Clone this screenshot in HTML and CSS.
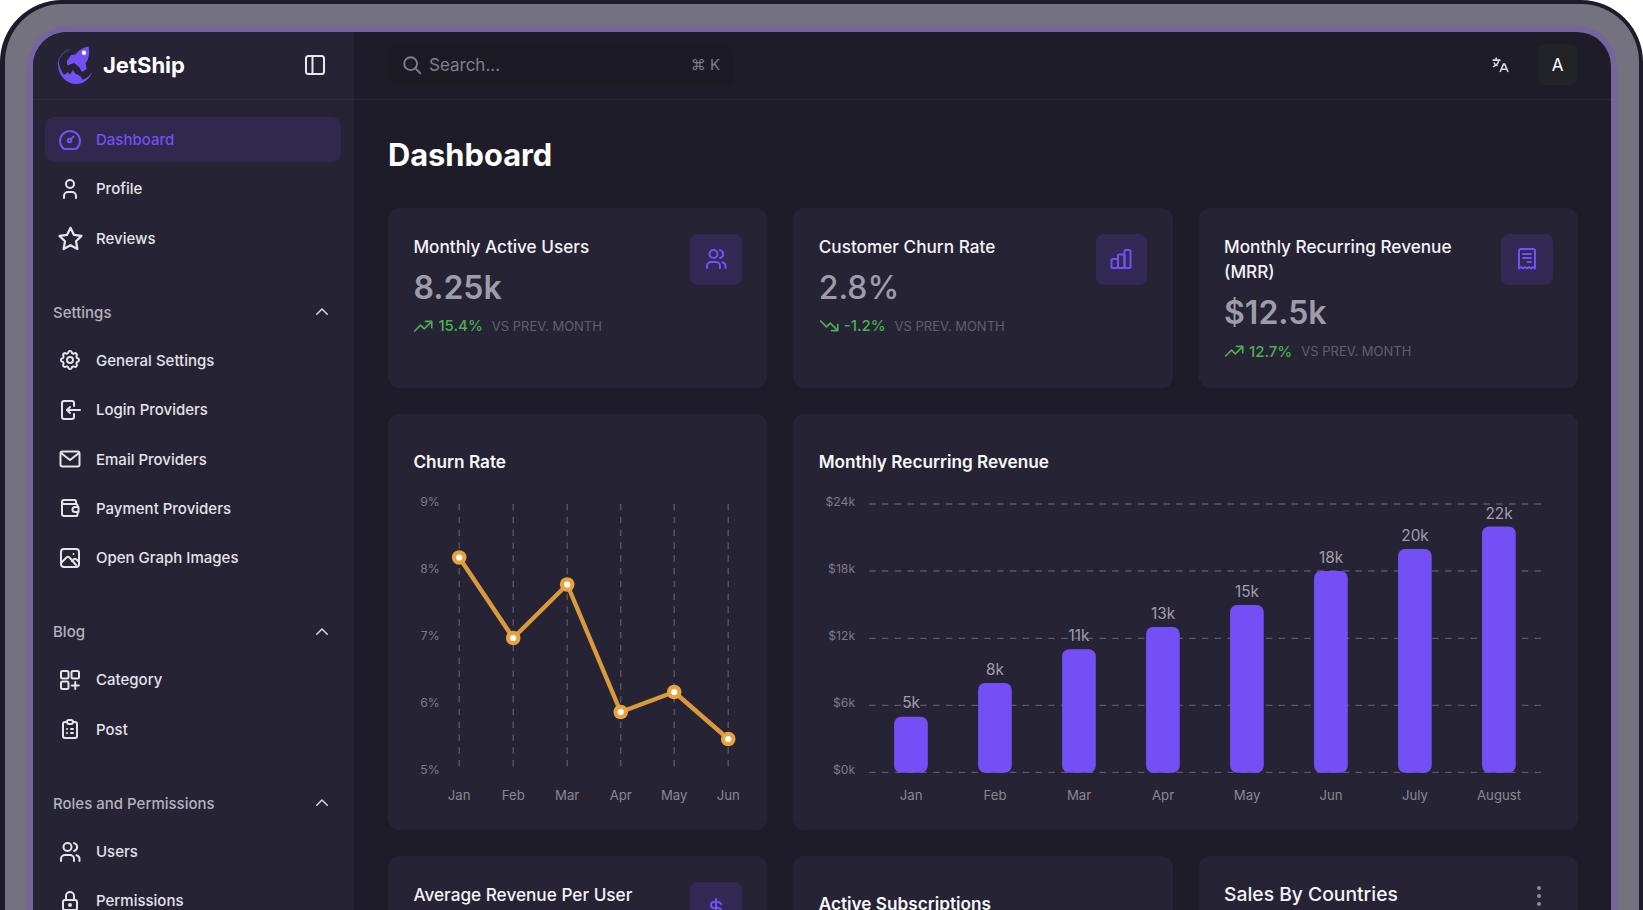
FILE: index.html
```html
<!DOCTYPE html>
<html lang="en">
<head>
    <meta charset="UTF-8">
    <meta name="viewport" content="width=device-width, initial-scale=1.0">
    <title>JetShip Dashboard</title>
    <link rel="stylesheet" href="styles.css">
</head>

<body>
    <div class="device">
        <div class="screen">

            <!-- Sidebar -->
            <aside class="sidebar">
                <div class="brand">
                    <div class="brand-left">
                        <svg class="logo" viewBox="0 0 36 38">
                            <path d="M12.5 3.4A17.5 17.5 0 0 0 1 18" fill="none" stroke="#4a3a9a" stroke-width="1.2"/>
                            <path d="M1.5 14C-1 26 7 37 18 38C26 38.5 32 33.5 35.5 26C30 33 24 35.5 17 34.5C8 33 2.5 25 1.5 14Z" fill="#7350f5"/>
                            <path d="M4.5 28.5C7 29 9 28.5 10.5 26L13 28.5L16 24L18.5 28C22 28.5 25 31 26 35.5C18 38.5 9.5 36.5 4.5 28.5Z" fill="#7350f5"/>
                            <path d="M31.5 0.5C33 6 32 13 28.5 17.5L29.8 23L25 26L22.5 21.5L17 17L10 19.5L10 15L14 9L18.5 8.5C21.5 4 26 1.5 31.5 0.5Z" fill="#7350f5"/>
                            <circle cx="27" cy="6.8" r="2.2" fill="#fff"/>
                        </svg>
                        <span class="brand-name">JetShip</span>
                    </div>
                    <svg class="icon" viewBox="0 0 24 24"><rect x="3" y="3" width="18" height="18" rx="2.5"/><path d="M9.5 3v18"/></svg>
                </div>

                <nav class="nav">
                    <a class="nav-item active">
                        <svg class="icon" viewBox="0 0 24 24"><path d="M6 21a10 10 0 1 1 12 0Z"/><circle cx="11.5" cy="12.5" r="1.8"/><path d="M13 11l2.5-2.5"/></svg>
                        Dashboard
                    </a>
                    <a class="nav-item">
                        <svg class="icon" viewBox="0 0 24 24"><circle cx="12" cy="7" r="4"/><path d="M6 21v-2a4 4 0 0 1 4-4h4a4 4 0 0 1 4 4v2"/></svg>
                        Profile
                    </a>
                    <a class="nav-item">
                        <svg class="icon star" viewBox="0 0 24 24"><path d="M12 2.5l3 6.2 6.8 1-4.9 4.8 1.2 6.8-6.1-3.2-6.1 3.2 1.2-6.8-4.9-4.8 6.8-1z"/></svg>
                        Reviews
                    </a>

                    <div class="nav-label">
                        <span>Settings</span>
                        <svg class="chevron" viewBox="0 0 24 24"><path d="M5 15l7-7 7 7"/></svg>
                    </div>
                    <a class="nav-item">
                        <svg class="icon" viewBox="0 0 24 24"><path d="M10.3 4.3c.4-1.8 3-1.8 3.4 0a1.7 1.7 0 0 0 2.6 1.1c1.5-.9 3.3.8 2.4 2.4a1.7 1.7 0 0 0 1 2.5c1.8.4 1.8 3 0 3.4a1.7 1.7 0 0 0-1 2.6c.9 1.5-.9 3.3-2.4 2.4a1.7 1.7 0 0 0-2.6 1c-.4 1.8-3 1.8-3.4 0a1.7 1.7 0 0 0-2.6-1c-1.5.9-3.3-.9-2.4-2.4a1.7 1.7 0 0 0-1-2.6c-1.8-.4-1.8-3 0-3.4a1.7 1.7 0 0 0 1-2.5c-.9-1.6.9-3.3 2.4-2.4 1 .6 2.3.1 2.6-1.1z"/><circle cx="12" cy="12" r="3"/></svg>
                        General Settings
                    </a>
                    <a class="nav-item">
                        <svg class="icon" viewBox="0 0 24 24"><path d="M16 8V5a2 2 0 0 0-2-2H6a2 2 0 0 0-2 2v14a2 2 0 0 0 2 2h8a2 2 0 0 0 2-2v-3"/><path d="M22 12H9"/><path d="M12 9l-3 3 3 3"/></svg>
                        Login Providers
                    </a>
                    <a class="nav-item">
                        <svg class="icon" viewBox="0 0 24 24"><rect x="2.5" y="4.5" width="19" height="15" rx="2"/><path d="M3 6l9 7 9-7"/></svg>
                        Email Providers
                    </a>
                    <a class="nav-item">
                        <svg class="icon" viewBox="0 0 24 24"><path d="M18 8V5.5a1.5 1.5 0 0 0-1.5-1.5H6a2 2 0 0 0-2 2v12a2 2 0 0 0 2 2h12a1.5 1.5 0 0 0 1.5-1.5V16"/><path d="M4 6a2 2 0 0 0 2 2h12a1.5 1.5 0 0 1 1.5 1.5V11"/><path d="M20.5 11v5H17a2.5 2.5 0 0 1 0-5z"/></svg>
                        Payment Providers
                    </a>
                    <a class="nav-item">
                        <svg class="icon" viewBox="0 0 24 24"><rect x="3" y="3" width="18" height="18" rx="3"/><path d="M3 17l5.5-5.5c1-.9 2-.9 3 0L18 19"/><path d="M14 15l1.5-1.5c1-.9 2-.9 3 0L21 16"/><path d="M15.5 8h.01"/></svg>
                        Open Graph Images
                    </a>

                    <div class="nav-label">
                        <span>Blog</span>
                        <svg class="chevron" viewBox="0 0 24 24"><path d="M5 15l7-7 7 7"/></svg>
                    </div>
                    <a class="nav-item">
                        <svg class="icon" viewBox="0 0 24 24"><rect x="3" y="3" width="7.5" height="7.5" rx="1.5"/><rect x="13.5" y="3" width="7.5" height="7.5" rx="1.5"/><rect x="3" y="13.5" width="7.5" height="7.5" rx="1.5"/><path d="M17.25 14v7M13.75 17.5h7"/></svg>
                        Category
                    </a>
                    <a class="nav-item">
                        <svg class="icon" viewBox="0 0 24 24"><path d="M9 5H7a2 2 0 0 0-2 2v12a2 2 0 0 0 2 2h10a2 2 0 0 0 2-2V7a2 2 0 0 0-2-2h-2"/><rect x="9" y="3" width="6" height="4" rx="2"/><path d="M9 12h.01M13 12h2M9 16h.01M13 16h2"/></svg>
                        Post
                    </a>

                    <div class="nav-label">
                        <span>Roles and Permissions</span>
                        <svg class="chevron" viewBox="0 0 24 24"><path d="M5 15l7-7 7 7"/></svg>
                    </div>
                    <a class="nav-item">
                        <svg class="icon" viewBox="0 0 24 24"><circle cx="9.5" cy="7" r="4"/><path d="M3 21v-2a4 4 0 0 1 4-4h5a4 4 0 0 1 4 4v2"/><path d="M16 3.1a4 4 0 0 1 0 7.8"/><path d="M21.5 21v-2a4 4 0 0 0-3-3.8"/></svg>
                        Users
                    </a>
                    <a class="nav-item">
                        <svg class="icon" viewBox="0 0 24 24"><rect x="5" y="11" width="14" height="10" rx="2"/><circle cx="12" cy="16" r="1"/><path d="M8 11V7a4 4 0 0 1 8 0v4"/></svg>
                        Permissions
                    </a>
                </nav>
            </aside>

            <!-- Main area -->
            <div class="main">
                <header class="topbar">
                    <div class="search">
                        <svg class="icon search-icon" viewBox="0 0 24 24"><circle cx="10.5" cy="10.5" r="7"/><path d="M21 21l-5.5-5.5"/></svg>
                        <span class="search-text">Search...</span>
                        <span class="search-key">⌘ K</span>
                    </div>
                    <div class="topbar-right">
                        <svg class="translate" viewBox="0 0 24 24"><path d="M2 6.5h10M6.5 3v3.5M10 6.5c-.8 3.8-3.5 6.8-7.5 8.5M3.5 9.5c1 2 2.8 3.3 5 4"/><path d="M11.5 21.5l4.2-10h1.6l4.2 10M13 18h8"/></svg>
                        <div class="avatar">A</div>
                    </div>
                </header>

                <main class="content">
                    <h1>Dashboard</h1>

                    <section class="stats">
                        <div class="card stat">
                            <div class="stat-body">
                                <div class="stat-title">Monthly Active Users</div>
                                <div class="stat-value">8.25k</div>
                                <div class="trend">
                                    <svg class="trend-icon" viewBox="0 0 24 24"><path d="M2 18l7-7 4.5 4.5L22 7"/><path d="M15 6.5h7.5V14"/></svg>
                                    <span class="trend-num">15.4%</span>
                                    <span class="trend-note">VS PREV. MONTH</span>
                                </div>
                            </div>
                            <div class="icon-box">
                                <svg class="icon" viewBox="0 0 24 24"><circle cx="9.5" cy="7" r="4"/><path d="M3 21v-2a4 4 0 0 1 4-4h5a4 4 0 0 1 4 4v2"/><path d="M16 3.1a4 4 0 0 1 0 7.8"/><path d="M21.5 21v-2a4 4 0 0 0-3-3.8"/></svg>
                            </div>
                        </div>

                        <div class="card stat">
                            <div class="stat-body">
                                <div class="stat-title">Customer Churn Rate</div>
                                <div class="stat-value light">2.8%</div>
                                <div class="trend">
                                    <svg class="trend-icon" viewBox="0 0 24 24"><path d="M2 6l7 7 4.5-4.5L22 17"/><path d="M15 17.5h7.5V10"/></svg>
                                    <span class="trend-num">-1.2%</span>
                                    <span class="trend-note">VS PREV. MONTH</span>
                                </div>
                            </div>
                            <div class="icon-box">
                                <svg class="icon" viewBox="0 0 24 24"><rect x="2.5" y="12" width="6.5" height="9" rx="1.5"/><rect x="9" y="7.5" width="6.5" height="13.5" rx="1"/><rect x="15.5" y="3" width="6" height="18" rx="1.5"/></svg>
                            </div>
                        </div>

                        <div class="card stat">
                            <div class="stat-body">
                                <div class="stat-title">Monthly Recurring Revenue (MRR)</div>
                                <div class="stat-value">$12.5k</div>
                                <div class="trend">
                                    <svg class="trend-icon" viewBox="0 0 24 24"><path d="M2 18l7-7 4.5 4.5L22 7"/><path d="M15 6.5h7.5V14"/></svg>
                                    <span class="trend-num">12.7%</span>
                                    <span class="trend-note">VS PREV. MONTH</span>
                                </div>
                            </div>
                            <div class="icon-box">
                                <svg class="icon" viewBox="0 0 24 24"><path d="M4 21.5V4a2 2 0 0 1 2-2h12a2 2 0 0 1 2 2v17.5l-2-1.5-2 1.5-2-1.5-2 1.5-2-1.5-2 1.5-2-1.5z"/><path d="M8 7h8M8 11h8M12.5 15H16"/></svg>
                            </div>
                        </div>
                    </section>

                    <section class="charts">
                        <div class="card chart-card">
                            <h2 class="card-title">Churn Rate</h2>
                            <svg class="chart" viewBox="-1.2 0 328.5 316" height="316">
                                <g class="grid">
                                    <path d="M45 14V278"/><path d="M99 14V278"/><path d="M153 14V278"/><path d="M206.5 14V278"/><path d="M260 14V278"/><path d="M314 14V278"/>
                                </g>
                                <g class="axis-y">
                                    <text x="25.5" y="16">9%</text><text x="25.5" y="83">8%</text><text x="25.5" y="150">7%</text><text x="25.5" y="217">6%</text><text x="25.5" y="284">5%</text>
                                </g>
                                <g class="axis-x">
                                    <text x="45" y="310">Jan</text><text x="99" y="310">Feb</text><text x="153" y="310">Mar</text><text x="206.5" y="310">Apr</text><text x="260" y="310">May</text><text x="314" y="310">Jun</text>
                                </g>
                                <polyline class="line" points="45,67.5 99,148 153,94.5 206.5,222 260,202 314,249"/>
                                <g class="dot-outer">
                                    <circle cx="45" cy="67.5" r="7.3"/><circle cx="99" cy="148" r="7.3"/><circle cx="153" cy="94.5" r="7.3"/><circle cx="206.5" cy="222" r="7.3"/><circle cx="260" cy="202" r="7.3"/><circle cx="314" cy="249" r="7.3"/>
                                </g>
                                <g class="dot-inner">
                                    <circle cx="45" cy="67.5" r="3.1"/><circle cx="99" cy="148" r="3.1"/><circle cx="153" cy="94.5" r="3.1"/><circle cx="206.5" cy="222" r="3.1"/><circle cx="260" cy="202" r="3.1"/><circle cx="314" cy="249" r="3.1"/>
                                </g>
                            </svg>
                        </div>

                        <div class="card chart-card">
                            <h2 class="card-title">Monthly Recurring Revenue</h2>
                            <svg class="chart" viewBox="-0.1 0 734 316" height="316">
                                <g class="grid">
                                    <path d="M50 14H722"/><path d="M50 81H722"/><path d="M50 148.3H722"/><path d="M50 215.3H722"/><path d="M50 282.3H722"/>
                                </g>
                                <g class="axis-y">
                                    <text x="36" y="16">$24k</text><text x="36" y="83">$18k</text><text x="36" y="150">$12k</text><text x="36" y="217">$6k</text><text x="36" y="284">$0k</text>
                                </g>
                                <g class="bars">
                                    <rect x="75" y="226.7" width="33.7" height="56" rx="7"/>
                                    <rect x="159" y="193" width="33.7" height="89.7" rx="7"/>
                                    <rect x="243" y="159.3" width="33.7" height="123.4" rx="7"/>
                                    <rect x="327" y="137" width="33.7" height="145.7" rx="7"/>
                                    <rect x="411" y="115" width="33.7" height="167.7" rx="7"/>
                                    <rect x="495" y="81" width="33.7" height="201.7" rx="7"/>
                                    <rect x="579" y="59" width="33.7" height="223.7" rx="7"/>
                                    <rect x="663" y="36.5" width="33.7" height="246.2" rx="7"/>
                                </g>
                                <g class="bar-value">
                                    <text x="92" y="218.5">5k</text><text x="176" y="185">8k</text><text x="260" y="151">11k</text><text x="344" y="129">13k</text><text x="428" y="107">15k</text><text x="512" y="73">18k</text><text x="596" y="51">20k</text><text x="680" y="28.5">22k</text>
                                </g>
                                <g class="axis-x">
                                    <text x="92" y="310">Jan</text><text x="176" y="310">Feb</text><text x="260" y="310">Mar</text><text x="344" y="310">Apr</text><text x="428" y="310">May</text><text x="512" y="310">Jun</text><text x="596" y="310">July</text><text x="680" y="310">August</text>
                                </g>
                            </svg>
                        </div>
                    </section>

                    <section class="stats">
                        <div class="card stat">
                            <div class="stat-body">
                                <div class="stat-title">Average Revenue Per User</div>
                            </div>
                            <div class="icon-box">
                                <svg class="icon" viewBox="0 0 24 24"><path d="M17 8a3.5 3.5 0 0 0-3-2h-4a3 3 0 0 0 0 6h4a3 3 0 0 1 0 6h-4a3.5 3.5 0 0 1-3-2"/><path d="M12 3v18"/></svg>
                            </div>
                        </div>
                        <div class="card chart-card">
                            <h2 class="card-title">Active Subscriptions</h2>
                        </div>
                        <div class="card stat">
                            <div class="stat-body">
                                <div class="sales-title">Sales By Countries</div>
                            </div>
                            <div class="kebab"><span></span><span></span><span></span></div>
                        </div>
                    </section>
                </main>
            </div>
        </div>
    </div>
</body>
</html>
```

FILE: styles.css
```css
* {
    box-sizing: border-box;
}

html,
body {
    margin: 0;
    height: 910px;
    overflow: hidden;
    background-color: #fff;
}

body {
    font-family: Inter, "Noto Sans", sans-serif;
    color: #fff;
}

.device {
    height: 1100px;
    background-color: #757280;
    border: solid #1e1c2b;
    border-width: 4px 4px 0 5px;
    border-radius: 62px 62px 0 0;
    padding: 22px 22px 0;
}

.screen {
    display: flex;
    height: 1050px;
    background-color: #1e1c29;
    border: 6px solid #75659f;
    border-bottom: 0;
    border-radius: 40px 40px 0 0;
    overflow: hidden;
}

.icon {
    width: 24px;
    height: 24px;
    flex-shrink: 0;
    fill: none;
    stroke: currentColor;
    stroke-width: 2;
    stroke-linecap: round;
    stroke-linejoin: round;
}

/* Sidebar */

.sidebar {
    width: 321px;
    flex-shrink: 0;
    background-color: #262335;
}

.brand {
    height: 68px;
    display: flex;
    align-items: center;
    justify-content: space-between;
    padding: 0 27px 2px 24px;
    border-bottom: 1px solid #312e41;
    color: #e8e7ec;
}

.brand-left {
    display: flex;
    align-items: center;
    gap: 10px;
}

.logo {
    width: 36px;
    height: 38px;
}

.brand-name {
    font-size: 22px;
    font-weight: 700;
    color: #fff;
}

.nav {
    padding: 17px 13px 0 11.5px;
    display: flex;
    flex-direction: column;
    gap: 4.33px;
}

.nav-item {
    height: 45px;
    display: flex;
    align-items: center;
    gap: 14px;
    padding-left: 13.5px;
    border-radius: 9px;
    font-size: 15px;
    font-weight: 500;
    color: #e4e3e8;
}

.nav-item.active {
    background-color: #30284d;
    color: #7350f5;
}

.star {
    width: 27px;
    height: 27px;
    margin: 0 -1.5px;
}

.nav-label {
    height: 24px;
    margin: 35.3px 0 9.3px;
    display: flex;
    align-items: center;
    justify-content: space-between;
    padding: 0 10px 0 8.5px;
    font-size: 15px;
    font-weight: 500;
    color: #b4b2bc;
}

.chevron {
    width: 18px;
    height: 18px;
    fill: none;
    stroke: #d8d7de;
    stroke-width: 2;
    stroke-linecap: round;
    stroke-linejoin: round;
}

/* Top bar */

.main {
    flex: 1;
    min-width: 0;
}

.topbar {
    height: 68px;
    display: flex;
    align-items: center;
    justify-content: space-between;
    padding: 0 33px 0 34px;
    border-bottom: 1px solid #2a2838;
}

.search {
    width: 345px;
    height: 40px;
    margin-top: -2px;
    display: flex;
    align-items: center;
    padding: 0 13px;
    border-radius: 8px;
    background-color: #1c1b24;
    color: #807e8a;
}

.search-icon {
    width: 22px;
    height: 22px;
    margin-right: 6px;
}

.search-text {
    flex: 1;
    font-size: 17px;
}

.search-key {
    font-size: 15px;
}

.topbar-right {
    display: flex;
    align-items: center;
    gap: 27px;
    margin-top: -2px;
}

.translate {
    width: 19px;
    height: 19px;
    fill: none;
    stroke: #d8d7de;
    stroke-width: 2;
}

.avatar {
    width: 41px;
    height: 41px;
    display: flex;
    align-items: center;
    justify-content: center;
    border-radius: 8px;
    background-color: #222328;
    font-size: 17px;
    font-weight: 400;
}

/* Content */

.content {
    padding: 0 33px 0 34px;
}

h1 {
    margin: 0;
    padding-top: 33px;
    height: 108px;
    font-size: 30.8px;
    line-height: 44px;
    font-weight: 700;
}

.stats {
    display: grid;
    grid-template-columns: repeat(3, 1fr);
    gap: 26px;
    margin-bottom: 26.4px;
}

.charts {
    display: grid;
    grid-template-columns: 379.3px 1fr;
    gap: 26px;
    margin-bottom: 26px;
}

.card {
    background-color: #262335;
    border-radius: 11px;
    padding: 25.5px 25.4px 24.6px;
}

.stat {
    display: flex;
    justify-content: space-between;
    gap: 24px;
}

.stat-title {
    font-size: 17.2px;
    line-height: 25.6px;
    font-weight: 500;
    color: #f4f3f6;
}

.stat-value {
    margin-top: 6.6px;
    font-size: 32px;
    line-height: 44px;
    font-weight: 600;
    color: #9e9ca8;
}

.stat-value.light {
    font-weight: 500;
}

.trend {
    display: flex;
    align-items: center;
    gap: 5px;
    height: 24px;
    margin-top: 3.9px;
}

.trend-icon {
    width: 20px;
    height: 20px;
    fill: none;
    stroke: #4caf50;
    stroke-width: 2;
    stroke-linecap: round;
    stroke-linejoin: round;
}

.trend-num {
    font-size: 15px;
    font-weight: 500;
    color: #4caf50;
}

.trend-note {
    margin-left: 4px;
    font-size: 13px;
    color: #615f6d;
}

.icon-box {
    width: 51.7px;
    height: 51.7px;
    flex-shrink: 0;
    display: flex;
    align-items: center;
    justify-content: center;
    border-radius: 8px;
    background-color: #322a55;
    color: #7350f5;
}

.chart-card {
    padding-bottom: 24px;
}

.card-title {
    margin: 0 0 16.5px;
    padding-top: 9px;
    font-size: 17.2px;
    line-height: 25px;
    font-weight: 600;
    color: #f8f8fa;
}

.sales-title {
    font-size: 19.3px;
    line-height: 25.6px;
    font-weight: 500;
    color: #f4f3f6;
}

.kebab {
    display: flex;
    flex-direction: column;
    gap: 3.5px;
    padding: 4px 0 0;
    margin-right: 11.3px;
}

.kebab span {
    width: 4.5px;
    height: 4.5px;
    border-radius: 50%;
    background-color: #8f8d99;
}

/* Charts */

.chart {
    display: block;
    width: 100%;
}

.chart text {
    font-family: Inter, sans-serif;
}

.grid path {
    fill: none;
    stroke: #5a5866;
    stroke-width: 1.3;
    stroke-dasharray: 6.5 6.3;
}

.axis-y text {
    text-anchor: end;
    font-size: 12.2px;
    fill: #7d7b88;
}

.axis-x text {
    text-anchor: middle;
    font-size: 13.2px;
    fill: #8a8894;
}

.line {
    fill: none;
    stroke: #d99a3b;
    stroke-width: 4.4;
    stroke-linejoin: round;
}

.dot-outer circle {
    fill: #e8a33d;
}

.dot-inner circle {
    fill: #fff;
}

.bars rect {
    fill: #7350f5;
}

.bar-value text {
    text-anchor: middle;
    font-size: 15.4px;
    fill: #a09eaa;
}
```
